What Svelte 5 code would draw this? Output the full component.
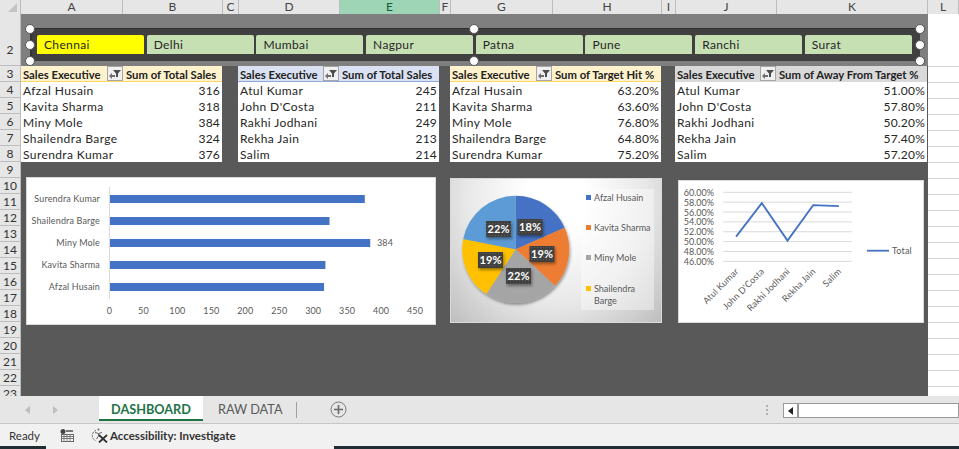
<script>
	const columns = [
		['A', 102], ['B', 100], ['C', 16], ['D', 101], ['E', 100], ['F', 11],
		['G', 102], ['H', 109], ['I', 14], ['J', 101], ['K', 151], ['L', 31]
	];
	const rows = Array.from({ length: 22 }, (_, i) => i + 2);
	const cities = ['Chennai', 'Delhi', 'Mumbai', 'Nagpur', 'Patna', 'Pune', 'Ranchi', 'Surat'];

	const topFive = ['Afzal Husain', 'Kavita Sharma', 'Miny Mole', 'Shailendra Barge', 'Surendra Kumar'];
	const bottomFive = ['Atul Kumar', "John D'Costa", 'Rakhi Jodhani', 'Rekha Jain', 'Salim'];

	const pivots = [
		{ tone: 'cream', first: 102, second: 99, gap: 16, title: 'Sum of Total Sales', names: topFive, values: ['316', '318', '384', '324', '376'] },
		{ tone: 'blue', first: 101, second: 100, gap: 11, title: 'Sum of Total Sales', names: bottomFive, values: ['245', '211', '249', '213', '214'] },
		{ tone: 'cream', first: 102, second: 109, gap: 14, title: 'Sum of Target Hit %', names: topFive, values: ['63.20%', '63.60%', '76.80%', '64.80%', '75.20%'] },
		{ tone: 'grey', first: 101, second: 151, gap: 0, title: 'Sum of Away From Target %', names: bottomFive, values: ['51.00%', '57.80%', '50.20%', '57.40%', '57.20%'] }
	];

	// bar chart
	const sales = [376, 324, 384, 318, 316];
	const barNames = [...topFive].reverse();
	const ticks = [0, 50, 100, 150, 200, 250, 300, 350, 400, 450];
	const barX = (v) => 83.5 + v * 0.679;

	// pie chart, centre 65.7,71.3 inside its card
	const pieValues = [316, 318, 384, 324, 376];
	const pieColors = ['#4472c4', '#ed7d31', '#a5a5a5', '#ffc000', '#5b9bd5'];
	const total = pieValues.reduce((a, b) => a + b, 0);
	function slices() {
		let angle = 0;
		return pieValues.map((v, i) => {
			const next = angle + (v / total) * Math.PI * 2;
			const x1 = 65.7 + 53.5 * Math.sin(angle);
			const y1 = 71.3 - 53.5 * Math.cos(angle);
			const x2 = 65.7 + 53.5 * Math.sin(next);
			const y2 = 71.3 - 53.5 * Math.cos(next);
			angle = next;
			return { d: `M65.7 71.3L${x1} ${y1}A53.5 53.5 0 0 1 ${x2} ${y2}Z`, fill: pieColors[i] };
		});
	}
	const pieLabels = [
		{ x: 80, y: 49, t: '18%' },
		{ x: 92, y: 76, t: '19%' },
		{ x: 68.5, y: 98, t: '22%' },
		{ x: 40.5, y: 82, t: '19%' },
		{ x: 48.5, y: 51, t: '22%' }
	];
	const pieLegend = [
		{ y: 20, c: '#4472c4', t: ['Afzal Husain'] },
		{ y: 50, c: '#ed7d31', t: ['Kavita Sharma'] },
		{ y: 80, c: '#a5a5a5', t: ['Miny Mole'] },
		{ y: 111, c: '#ffc000', t: ['Shailendra', 'Barge'] }
	];

	// line chart
	const pct = [60, 58, 56, 54, 52, 50, 48, 46];
	const lineVals = [51, 57.8, 50.2, 57.4, 57.2];
	const lineY = (v) => 12.3 + (60 - v) * 4.93;
	const lineX = (i) => 58.1 + i * 25.7;
	const linePts = lineVals.map((v, i) => `${lineX(i)},${lineY(v)}`).join(' ');
</script>

<div class="excel">
	<div class="colhead">
		<div class="corner"><span class="tri"></span></div>
		{#each columns as [name, w]}
			<div class="col" class:active={name === 'E'} style="width:{w}px">{name}</div>
		{/each}
	</div>

	<div class="body">
		<div class="rowhead">
			{#each rows as r}
				<div class="row" class:tall={r === 2}>{r}</div>
			{/each}
		</div>

		<div class="canvas">
			<div class="band">
				<div class="slicer">
					{#each cities as city, i}
						<div class="city" class:picked={i === 0}>{city}</div>
					{/each}
				</div>
				{#each [[30, 29], [30, 45], [30, 61], [474, 29], [474, 61], [920, 29], [920, 45], [920, 61]] as [x, y]}
					<span class="handle" style="left:{x - 21 - 5}px;top:{y - 14 - 5}px"></span>
				{/each}
			</div>

			<div class="pivots">
				{#each pivots as p}
					<div class="pivot" style="grid-template-columns:{p.first}px {p.second}px;margin-right:{p.gap}px">
						<div class="th {p.tone}">
							<span>Sales Executive</span>
							<span class="filter">
								<svg width="12" height="10" viewBox="0 0 12 10">
									<path d="M4 1h8L9 4.5V8H7V4.5z" fill="#4d4d4d" />
									<path d="M0 7l3-3v2h3v2H3v2z" fill="#6f6f6f" />
								</svg>
							</span>
						</div>
						<div class="th {p.tone} title">{p.title}</div>
						{#each p.names as name, i}
							<div class="td">{name}</div>
							<div class="td num">{p.values[i]}</div>
						{/each}
					</div>
				{/each}
			</div>

			<div class="charts">
				<div class="card bar">
					<svg width="410" height="148" viewBox="0 0 410 148">
						<line x1="83.5" y1="10" x2="83.5" y2="122" stroke="#d9d9d9" />
						{#each sales as v, i}
							<rect x="84" y={18 + i * 22} width={barX(v) - 84} height="8" fill="#4472c4" />
							<text x="74" y={24.5 + i * 22} text-anchor="end">{barNames[i]}</text>
						{/each}
						<text x="351" y="69">384</text>
						{#each ticks as t}
							<text x={barX(t)} y="137" text-anchor="middle">{t}</text>
						{/each}
					</svg>
				</div>

				<div class="card pie">
					<svg width="212" height="145" viewBox="0 0 212 145">
						<defs>
							<filter id="drop" x="-30%" y="-30%" width="160%" height="160%">
								<feDropShadow dx="1" dy="2" stdDeviation="1.5" flood-color="#000" flood-opacity="0.4" />
							</filter>
							<pattern id="dots" width="3" height="3" patternUnits="userSpaceOnUse">
								<rect width="3" height="3" fill="#404040" />
								<rect width="1" height="1" fill="#5c5c5c" />
							</pattern>
						</defs>
						<g filter="url(#drop)">
							{#each slices() as s}
								<path d={s.d} fill={s.fill} />
							{/each}
						</g>
						<rect x="131" y="11" width="73" height="121" fill="#fff" fill-opacity="0.4" />
						{#each pieLegend as l}
							<rect x="136" y={l.y - 3} width="5" height="5" fill={l.c} />
							{#each l.t as line, n}
								<text class="key" x="144" y={l.y + 3 + n * 12}>{line}</text>
							{/each}
						{/each}
						{#each pieLabels as l}
							<g filter="url(#drop)">
								<rect x={l.x - 12.5} y={l.y - 8} width="25" height="16" fill="url(#dots)" />
							</g>
							<text class="pct" x={l.x} y={l.y + 4} text-anchor="middle">{l.t}</text>
						{/each}
					</svg>
				</div>

				<div class="card line">
					<svg width="246" height="143" viewBox="0 0 246 143">
						{#each pct as p, i}
							<line x1="45.3" x2="173.7" y1={12.3 + i * 9.86} y2={12.3 + i * 9.86} stroke="#d9d9d9" />
							<text class="key" x="36" y={15.8 + i * 9.86} text-anchor="end">{p.toFixed(2)}%</text>
						{/each}
						<polyline points={linePts} fill="none" stroke="#4472c4" stroke-width="1.8" />
						{#each bottomFive as name, i}
							<text x={lineX(i) + 3} y="92" text-anchor="end" transform="rotate(-45 {lineX(i) + 3} 92)">{name}</text>
						{/each}
						<line x1="189" x2="211" y1="70.7" y2="70.7" stroke="#4472c4" stroke-width="1.8" />
						<text x="214" y="73.5">Total</text>
					</svg>
				</div>
			</div>
		</div>

		<div class="rightcol"></div>
	</div>

	<div class="tabs">
		<span class="nav">
			<svg width="40" height="10" viewBox="0 0 40 10">
				<path d="M8 1L3 5l5 4z" fill="#bdbdbd" />
				<path d="M31 1l5 4-5 4z" fill="#bdbdbd" />
			</svg>
		</span>
		<div class="tab on">DASHBOARD</div>
		<div class="tab">RAW DATA</div>
		<span class="divider"></span>
		<span class="plus">
			<svg width="17" height="17" viewBox="0 0 17 17">
				<circle cx="8.5" cy="8.5" r="7.5" fill="none" stroke="#7a7a7a" />
				<path d="M8.5 4v9M4 8.5h9" stroke="#6a6a6a" stroke-width="1.6" />
			</svg>
		</span>
		<span class="grip"><i></i><i></i><i></i></span>
		<div class="scroll">
			<span class="scrollbtn">
				<svg width="6" height="8" viewBox="0 0 6 8"><path d="M5 0v8L0 4z" fill="#222" /></svg>
			</span>
			<span class="track"></span>
		</div>
	</div>

	<div class="status">
		<span class="ready">Ready</span>
		<svg class="macro" width="14" height="13" viewBox="0 0 14 13">
			<circle cx="3" cy="2.5" r="2.5" fill="#444" />
			<rect x="6" y="1" width="7" height="2" fill="#777" />
			<rect x="1.5" y="5.5" width="12" height="7" fill="#fff" stroke="#666" />
			<path d="M1 7.5h13M1 9.5h13M4 5v8M7 5v8M10 5v8" stroke="#777" />
		</svg>
		<svg class="access" width="17" height="15" viewBox="0 0 17 15">
			<path d="M5 2.4A5.5 5.5 0 0 0 4.5 12.6" fill="none" stroke="#666" stroke-dasharray="2 1" />
			<circle cx="7.5" cy="1.5" r="1" fill="#666" />
			<path d="M4 4.5l3.5 1 3.5-1M7.5 5.5v2.5l-2 3" fill="none" stroke="#666" />
			<path d="M8 7l8 7.5M16 7l-8 7.5" stroke="#333" stroke-width="1.8" />
		</svg>
		<b>Accessibility: Investigate</b>
	</div>

	<div class="taskbar"><span></span></div>
</div>

<style>
	:global(body) {
		margin: 0;
		background: #fff;
	}
	.excel {
		width: 959px;
		height: 449px;
		overflow: hidden;
		display: flex;
		flex-direction: column;
		font-family: Lato, "Liberation Sans", sans-serif;
		color: #262626;
	}
	.colhead {
		display: flex;
		flex: 0 0 14px;
		background: #e6e6e6;
		font-size: 12px;
		line-height: 13px;
		color: #444;
	}
	.corner {
		flex: 0 0 21px;
		box-sizing: border-box;
		display: flex;
		align-items: flex-end;
		justify-content: flex-end;
		padding: 0 3px 2px 0;
		border-right: 1px solid #bdbdbd;
	}
	.tri {
		width: 0;
		height: 0;
		border-left: 9px solid transparent;
		border-bottom: 9px solid #c4c4c4;
	}
	.col {
		box-sizing: border-box;
		flex: none;
		text-align: center;
		border-right: 1px solid #bdbdbd;
	}
	.col.active {
		background: #9fd5b7;
		color: #0f5c36;
	}
	.body {
		display: flex;
		flex: 0 0 382px;
		overflow: hidden;
	}
	.rowhead {
		flex: 0 0 21px;
		box-sizing: border-box;
		background: #e6e6e6;
		border-right: 1px solid #bdbdbd;
		font-size: 12px;
		color: #333;
		text-align: center;
	}
	.row {
		box-sizing: border-box;
		height: 16px;
		line-height: 15px;
		border-bottom: 1px solid #bdbdbd;
	}
	.row.tall {
		height: 52px;
		line-height: 72px;
		overflow: hidden;
	}
	.canvas {
		flex: 0 0 907px;
		background: #595959;
		display: flex;
		flex-direction: column;
	}
	.band {
		position: relative;
		height: 52px;
		background: #7f7f7f;
		padding: 14px 0 0 9px;
		box-sizing: border-box;
	}
	.slicer {
		width: 890px;
		height: 33px;
		box-sizing: border-box;
		background: #404040;
		border-top: 1px solid #2e2e2e;
		border-left: 2px solid #333;
		padding: 6px 0 0 5px;
		display: flex;
		gap: 2.7px;
	}
	.city {
		width: 107px;
		height: 19px;
		box-sizing: border-box;
		padding-left: 7px;
		background: #c6e0b4;
		font-size: 12px;
		line-height: 20px;
		letter-spacing: 0.35px;
		border-radius: 2px 2px 0 0;
	}
	.city.picked {
		background: #ffff00;
	}
	.handle {
		position: absolute;
		width: 10px;
		height: 10px;
		box-sizing: border-box;
		border-radius: 50%;
		background: #fff;
		border: 1px solid #555;
	}
	.pivots {
		display: flex;
		height: 96px;
	}
	.pivot {
		display: grid;
		grid-template-rows: 16px repeat(5, 16px);
		background: #fff;
		align-self: flex-start;
	}
	.th {
		box-sizing: border-box;
		border-bottom: 1px solid #ffd966;
		font-size: 11.3px;
		font-weight: 700;
		line-height: 17px;
		padding-left: 2px;
		display: flex;
		justify-content: space-between;
		white-space: nowrap;
		color: #222;
	}
	.th.cream {
		background: #fff2cc;
	}
	.th.blue {
		background: #d9e1f2;
		border-bottom-color: #8ea9db;
	}
	.th.grey {
		background: #d9d9d9;
		border-bottom-color: #d9d9d9;
	}
	.title {
		padding-left: 3px;
	}
	.filter {
		width: 16px;
		height: 15px;
		box-sizing: border-box;
		background: #f0f0f0;
		border: 1px solid #a6a6a6;
		display: flex;
		align-items: center;
		justify-content: center;
	}
	.td {
		font-size: 12px;
		line-height: 18px;
		letter-spacing: 0.4px;
		padding: 0 2px;
		white-space: nowrap;
		height: 16px;
	}
	.num {
		text-align: right;
		letter-spacing: 0.2px;
	}
	.charts {
		display: flex;
		align-items: flex-start;
		padding: 15px 0 0 5px;
	}
	.card {
		background: #fff;
		flex: none;
		box-shadow: inset 0 0 0 1px #d9d9d9;
	}
	.card svg {
		display: block;
	}
	.card text {
		font-size: 9px;
		font-family: Lato, "Liberation Sans", sans-serif;
		fill: #595959;
		letter-spacing: 0.15px;
	}
	.pie {
		width: 212px;
		height: 145px;
		margin: 1px 0 0 14px;
		background: radial-gradient(ellipse at 50% 15%, #ffffff 20%, #e8e8e8 60%, #bdbdbd 100%);
	}
	.card .key {
		letter-spacing: 0;
	}
	.card .pct {
		fill: #fff;
		font-weight: 700;
		font-size: 11px;
	}
	.line {
		width: 246px;
		height: 143px;
		margin: 3px 0 0 16px;
	}
	.rightcol {
		flex: 0 0 31px;
		background: repeating-linear-gradient(to bottom, #d4d4d4 0 1px, #fff 1px 16px) 0 52px / 100% 321px no-repeat;
	}
	.tabs {
		flex: 0 0 28px;
		display: flex;
		align-items: flex-start;
		background: #e6e6e6;
		border-bottom: 1px solid #c6c6c6;
		box-sizing: border-box;
		position: relative;
	}
	.nav {
		margin: 9px 0 0 22px;
		width: 77px;
		line-height: 0;
	}
	.tab {
		height: 25px;
		box-sizing: border-box;
		font-size: 12.7px;
		line-height: 26px;
		padding: 0 0 0 15px;
		color: #5a5a5a;
		width: 93px;
		white-space: nowrap;
	}
	.tab.on {
		width: 104px;
		background: #fff;
		color: #217346;
		font-weight: 700;
		text-align: center;
		padding: 0;
		border-bottom: 2px solid #217346;
	}
	.divider {
		width: 1px;
		height: 16px;
		background: #a0a0a0;
		margin: 6px 0 0 0;
	}
	.plus {
		margin: 5px 0 0 33px;
		line-height: 0;
	}
	.grip {
		position: absolute;
		left: 766px;
		top: 9px;
		display: flex;
		flex-direction: column;
		gap: 2px;
	}
	.grip i {
		width: 2px;
		height: 2px;
		background: #b0b0b0;
	}
	.scroll {
		position: absolute;
		left: 783px;
		top: 7px;
		width: 176px;
		height: 15px;
		display: flex;
		box-sizing: border-box;
		border: 1px solid #999;
		background: #fff;
	}
	.scrollbtn {
		width: 13px;
		border-right: 2px solid #999;
		display: flex;
		align-items: center;
		justify-content: center;
	}
	.status {
		flex: 0 0 22px;
		display: flex;
		align-items: center;
		background: #f1f1f1;
		font-size: 11.5px;
		color: #333;
	}
	.ready {
		margin-left: 9px;
		width: 51px;
	}
	.access {
		margin-left: 17px;
		margin-right: 2px;
	}
	.status b {
		font-weight: 700;
	}
	.taskbar {
		flex: 1;
		background: #1f2d35;
		padding-left: 46px;
	}
	.taskbar span {
		display: block;
		width: 288px;
		height: 3px;
		background: #f1f1f1;
	}
</style>
